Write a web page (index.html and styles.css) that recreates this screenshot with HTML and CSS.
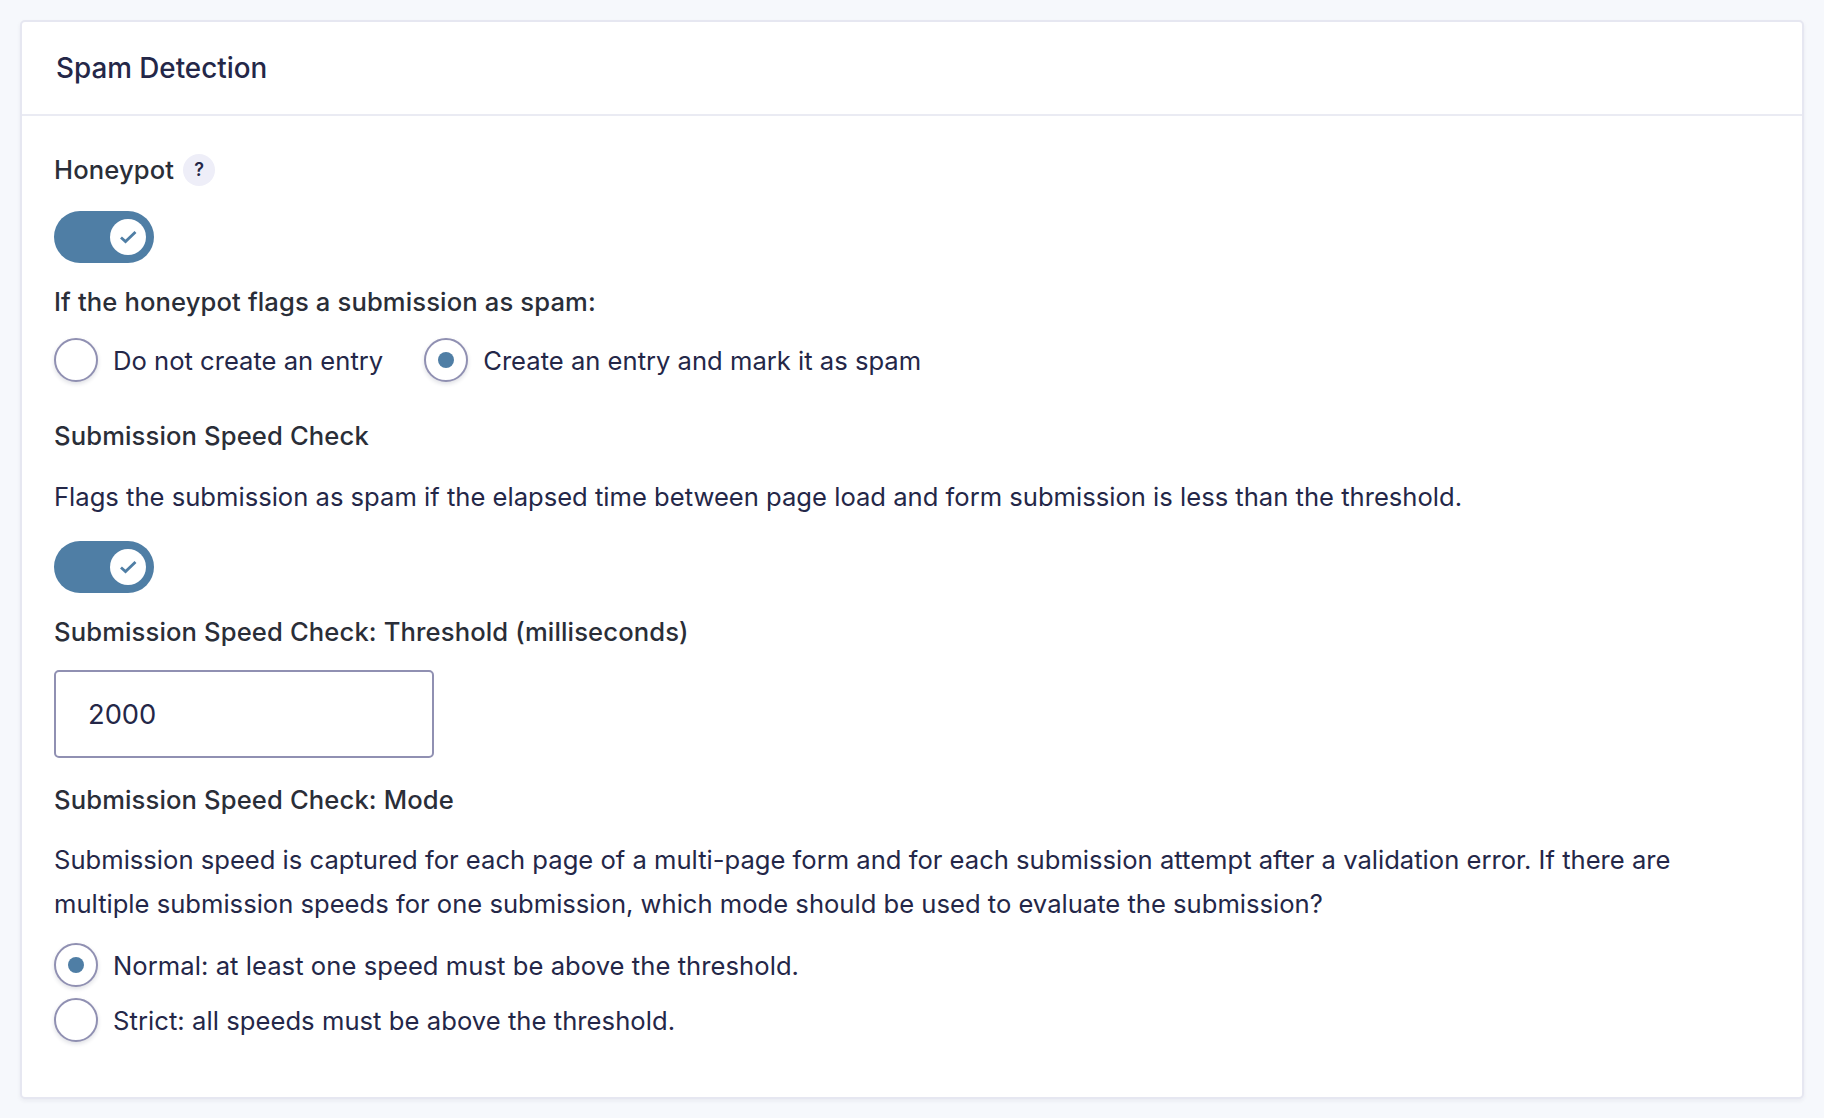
FILE: index.html
```html
<!DOCTYPE html>
<html lang="en">
<head>
  <meta charset="UTF-8" />
  <title>Spam Detection</title>
  <link rel="stylesheet" href="styles.css">
</head>
<body>
  <section class="card">
    <h2 class="card-title">Spam Detection</h2>
    <div class="card-body">
      <!-- Honeypot -->
      <div class="label label-help">
        <span>Honeypot</span>
        <span class="help">?</span>
      </div>
      <div class="toggle">
        <span class="knob">
          <svg viewBox="0 0 18 14" width="18" height="14"><path d="M2 7.500l4.500 4L16.500 2" fill="none" stroke="#4f7ea5" stroke-width="2.800"/></svg>
        </span>
      </div>
      <div class="label label-sub">If the honeypot flags a submission as spam:</div>
      <div class="radio-row">
        <label class="radio"><span class="dot"></span><span class="radio-text">Do not create an entry</span></label>
        <label class="radio"><span class="dot checked"></span><span class="radio-text">Create an entry and mark it as spam</span></label>
      </div>

      <!-- Speed check -->
      <div class="label label-speed">Submission Speed Check</div>
      <p class="desc desc-speed">Flags the submission as spam if the elapsed time between page load and form submission is less than the threshold.</p>
      <div class="toggle toggle-speed">
        <span class="knob">
          <svg viewBox="0 0 18 14" width="18" height="14"><path d="M2 7.500l4.500 4L16.500 2" fill="none" stroke="#4f7ea5" stroke-width="2.800"/></svg>
        </span>
      </div>
      <div class="label label-threshold">Submission Speed Check: Threshold (milliseconds)</div>
      <input class="text-input" type="text" value="2000">

      <!-- Mode -->
      <div class="label label-mode">Submission Speed Check: Mode</div>
      <p class="desc desc-mode">Submission speed is captured for each page of a multi-page form and for each submission attempt after a validation error. If there are multiple submission speeds for one submission, which mode should be used to evaluate the submission?</p>
      <div class="radio-col">
        <label class="radio"><span class="dot checked"></span><span class="radio-text">Normal: at least one speed must be above the threshold.</span></label>
        <label class="radio"><span class="dot"></span><span class="radio-text">Strict: all speeds must be above the threshold.</span></label>
      </div>
    </div>
  </section>
</body>
</html>
```

FILE: styles.css
```css
* {
  box-sizing: border-box;
  margin: 0;
  padding: 0;
}
body {
  background-color: #f6f8fc;
  color: #242748;
  font-family: Inter, "Liberation Sans", sans-serif;
  font-size: 25.6px;
  padding: 20px 20px 19px;
  height: 1118px;
  overflow: hidden;
}

/* Card */
.card {
  height: 1079px;
  background: #fff;
  border: 2px solid #e6e7f1;
  border-radius: 5px;
  box-shadow: 0 2px 4px rgba(36, 39, 72, 0.06);
}
.card-title {
  height: 94px;
  padding: 0 34px;
  display: flex;
  align-items: center;
  font-size: 27.8px;
  font-weight: 500;
  color: #242748;
  border-bottom: 2px solid #eaebf3;
}
.card-body {
  padding: 37px 32px 0;
}

/* Labels */
.label {
  font-weight: 500;
  color: #2a2e38;
  line-height: 34px;
  letter-spacing: 0.13px;
}
.label-help {
  display: flex;
  align-items: center;
  gap: 9px;
}
.help {
  width: 32px;
  height: 32px;
  border-radius: 50%;
  background: #eeeef8;
  color: #242748;
  font-size: 18px;
  font-weight: 600;
  display: flex;
  align-items: center;
  justify-content: center;
}
.label-sub {
  margin-top: 22px;
}
.label-speed {
  margin-top: 37px;
}
.label-threshold {
  margin-top: 22px;
}
.label-mode {
  margin-top: 25px;
}

/* Toggle */
.toggle {
  width: 100px;
  height: 52px;
  margin-top: 24px;
  padding: 8px;
  background: #4f7ea5;
  border-radius: 26px;
  display: flex;
  justify-content: flex-end;
}
.toggle-speed {
  margin-top: 22px;
}
.knob {
  width: 36px;
  height: 36px;
  border-radius: 50%;
  background: #fff;
  display: flex;
  align-items: center;
  justify-content: center;
}

/* Radios */
.radio-row {
  display: flex;
  gap: 41px;
  margin-top: 19px;
}
.radio-col {
  display: flex;
  flex-direction: column;
  gap: 11px;
  margin-top: 17px;
  letter-spacing: 0.05px;
}
.radio {
  display: flex;
  align-items: center;
  gap: 15px;
  height: 44px;
  line-height: 44px;
}
.radio-text {
  padding-top: 2px;
}
.dot {
  width: 44px;
  height: 44px;
  flex: none;
  border: 2px solid #9090b2;
  border-radius: 50%;
  background: #fff;
  box-shadow: 0 2px 4px rgba(36, 39, 72, 0.15);
  display: flex;
  align-items: center;
  justify-content: center;
}
.dot.checked::after {
  content: "";
  width: 16px;
  height: 16px;
  border-radius: 50%;
  background: #4f7ea5;
}

/* Description text */
.desc {
  line-height: 44px;
}
.desc-speed {
  margin-top: 22px;
}
.desc-mode {
  max-width: 1690px;
  margin-top: 21px;
}

/* Text input */
.text-input {
  display: block;
  width: 380px;
  height: 88px;
  margin-top: 21px;
  padding: 0 32px;
  border: 2px solid #9090b2;
  border-radius: 5px;
  background: #fff;
  color: #242748;
  font-family: inherit;
  font-size: 27.3px;
  outline: none;
}
```
